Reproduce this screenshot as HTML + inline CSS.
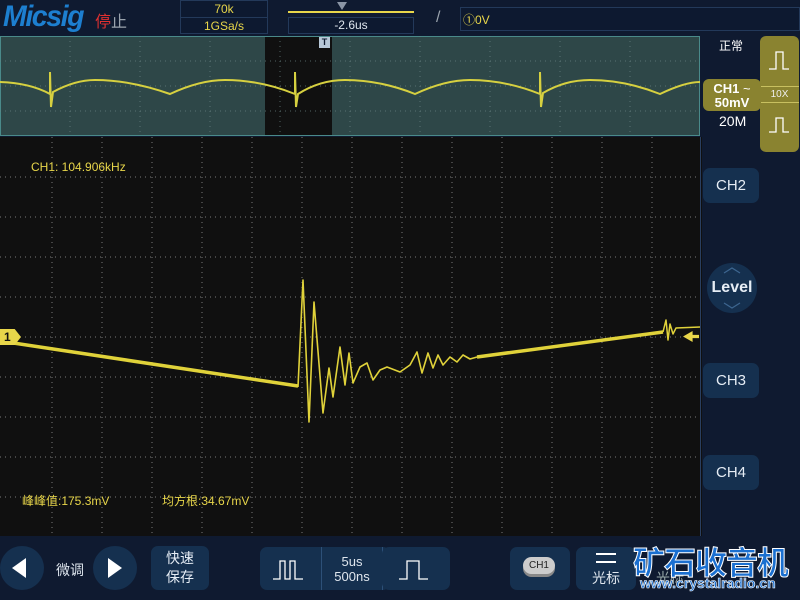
<!DOCTYPE html>
<html><head><meta charset="utf-8"><style>
*{margin:0;padding:0;box-sizing:border-box}
body{width:800px;height:600px;background:#0f1a30;overflow:hidden;position:relative;font-family:"Liberation Sans","Noto Sans CJK SC",sans-serif;color:#dfe6ee}
.a{position:absolute}
.box{position:absolute;border:1px solid #23395a;background:#0d1930}
.btn{position:absolute;background:#15304f;border-radius:7px;color:#e6edf5;text-align:center}
.y{color:#e8d64a}
</style></head><body>
<!-- top bar -->
<div class="a" style="left:3px;top:0px;font:italic bold 30px 'Liberation Sans',sans-serif;color:#1d7fd0;letter-spacing:-1.5px;transform:scaleX(.95);transform-origin:left">Micsig</div>
<div class="a" style="left:95px;top:8px;font-size:16px;color:#9aa3ad"><span style="color:#e03030">停</span>止</div>
<div class="box" style="left:180px;top:0;width:88px;height:34px"></div>
<div class="a y" style="left:180px;top:2px;width:88px;text-align:center;font-size:12px">70k</div>
<div class="a" style="left:180px;top:17px;width:88px;height:1px;background:#23395a"></div>
<div class="a y" style="left:180px;top:19px;width:88px;text-align:center;font-size:12px">1GSa/s</div>
<div class="a" style="left:288px;top:11px;width:126px;height:2px;background:#e8d64a"></div>
<div class="a" style="left:337px;top:2px;width:10px;height:8px;background:#8a95a5;clip-path:polygon(0 0,100% 0,50% 100%)"></div>
<div class="box" style="left:288px;top:17px;width:126px;height:17px"></div>
<div class="a" style="left:288px;top:18px;width:126px;text-align:center;font-size:12px">-2.6us</div>
<div class="a" style="left:436px;top:9px;font-size:16px;color:#9aa3ad">/</div>
<div class="box" style="left:460px;top:7px;width:340px;height:24px"></div>
<div class="a y" style="left:463px;top:11px;font-size:12px">①0V</div>
<!-- overview -->
<svg class="a" style="left:0;top:36px" width="700" height="100">
<rect width="700" height="100" fill="#2e4748"/>
<rect x="265" y="0" width="67" height="100" fill="#101010"/>
<rect x="0.5" y="0.5" width="699" height="99" fill="none" stroke="#4a8a8a"/>
<g stroke="#6a8585" stroke-width="1" stroke-dasharray="1 4" opacity=".7">
<line x1="0" y1="50" x2="700" y2="50"/><line x1="0" y1="25" x2="700" y2="25"/><line x1="0" y1="75" x2="700" y2="75"/>
<line x1="70" y1="0" x2="70" y2="100"/><line x1="140" y1="0" x2="140" y2="100"/><line x1="210" y1="0" x2="210" y2="100"/><line x1="280" y1="0" x2="280" y2="100"/><line x1="350" y1="0" x2="350" y2="100"/><line x1="420" y1="0" x2="420" y2="100"/><line x1="490" y1="0" x2="490" y2="100"/><line x1="560" y1="0" x2="560" y2="100"/><line x1="630" y1="0" x2="630" y2="100"/>
</g>
<path fill="none" stroke="#d6d040" stroke-width="2" d="M0 46Q30 47 50 58L50 36 51 71 53 56Q75 44 95 44Q130 44 170 58Q200 44 225 44Q260 44 295 58L295 36 296 71 298 58Q320 44 345 44Q380 44 415 58Q445 44 470 44Q505 44 540 58L540 36 541 71 543 57Q565 44 590 44Q625 44 660 58Q685 46 700 46"/>
</svg>
<div class="a" style="left:319px;top:37px;width:11px;height:11px;background:#b8c8d8;color:#0f1a30;font:bold 9px sans-serif;text-align:center;line-height:11px">T</div>
<div class="a" style="left:606px;top:137px;width:11px;height:11px;background:#b8c8d8;color:#0f1a30;font:bold 9px sans-serif;text-align:center;line-height:11px">T</div>
<!-- main -->
<svg class="a" style="left:0;top:137px" width="702" height="399">
<rect width="702" height="399" fill="#101010"/>
<g stroke="#7a7a7a" stroke-width="1" stroke-dasharray="1 4">
<line x1="0" y1="40" x2="700" y2="40"/><line x1="0" y1="80" x2="700" y2="80"/><line x1="0" y1="120" x2="700" y2="120"/><line x1="0" y1="160" x2="700" y2="160"/><line x1="0" y1="200" x2="700" y2="200"/><line x1="0" y1="240" x2="700" y2="240"/><line x1="0" y1="280" x2="700" y2="280"/><line x1="0" y1="320" x2="700" y2="320"/><line x1="0" y1="360" x2="700" y2="360"/>
<line x1="52" y1="0" x2="52" y2="399"/><line x1="102" y1="0" x2="102" y2="399"/><line x1="152" y1="0" x2="152" y2="399"/><line x1="202" y1="0" x2="202" y2="399"/><line x1="252" y1="0" x2="252" y2="399"/><line x1="302" y1="0" x2="302" y2="399"/><line x1="352" y1="0" x2="352" y2="399"/><line x1="402" y1="0" x2="402" y2="399"/><line x1="452" y1="0" x2="452" y2="399"/><line x1="502" y1="0" x2="502" y2="399"/><line x1="552" y1="0" x2="552" y2="399"/><line x1="602" y1="0" x2="602" y2="399"/><line x1="652" y1="0" x2="652" y2="399"/>
</g>
<line x1="700.5" y1="0" x2="700.5" y2="399" stroke="#2a3f60"/>
<g transform="translate(0,-137)" fill="none" stroke="#e0d23a" stroke-linejoin="round">
<polyline stroke-width="3.5" points="0,341 298,386"/>
<polyline stroke-width="1.6" points="298,387 303,280 309,422 314,302 323,413 329,368 333,397 340,347 345,385 349,353 353,383 360,367 367,363 373,380 380,370 387,367 400,372 410,365 417,352 422,373 428,353 433,368 438,355 443,365 450,357 457,362 463,355 470,359 477,357"/>
<polyline stroke-width="3.5" points="477,357 663,332"/>
<polyline stroke-width="1.5" points="663,332 666,320 668,340 670,324 673,334 676,328 700,327"/>
</g>
</svg>
<div class="a" style="left:0;top:329px;width:21px;height:16px;background:#e8d64a;clip-path:polygon(0 0,70% 0,100% 50%,70% 100%,0 100%);color:#111;font:bold 12px sans-serif;padding-left:4px;line-height:16px">1</div>
<div class="a" style="left:683px;top:331px;width:16px;height:11px;background:#e8d64a;clip-path:polygon(0 50%,60% 0,60% 35%,100% 35%,100% 65%,60% 65%,60% 100%)"></div>
<div class="a y" style="left:31px;top:160px;font-size:12px">CH1: 104.906kHz</div>
<div class="a y" style="left:22px;top:492px;font-size:12px">峰峰值:175.3mV</div>
<div class="a y" style="left:162px;top:492px;font-size:12px">均方根:34.67mV</div>
<!-- right panel -->
<div class="a" style="left:719px;top:37px;font-size:12px;color:#fff">正常</div>
<div class="a" style="left:760px;top:36px;width:39px;height:116px;background:#8a8330;border-radius:6px"></div>
<div class="a" style="left:760px;top:86px;width:39px;height:1px;background:#c8c060"></div>
<div class="a" style="left:760px;top:102px;width:39px;height:1px;background:#c8c060"></div>
<div class="a" style="left:760px;top:89px;width:39px;text-align:center;font-size:10px;color:#eee">10X</div>
<svg class="a" style="left:768px;top:50px" width="22" height="90"><path d="M1 19H8V2H15V19H21M1 82H8V68H15V82H21" fill="none" stroke="#fff" stroke-width="1.3"/></svg>
<div class="a" style="left:703px;top:79px;width:58px;height:32px;background:#8a8330;border-radius:6px;color:#fff;font:bold 13px sans-serif;text-align:center;line-height:14px;padding-top:3px">CH1 <span style="font-weight:normal">~</span><br>50mV</div>
<div class="a" style="left:719px;top:113px;font-size:14px;color:#fff">20M</div>
<div class="btn" style="left:703px;top:168px;width:56px;height:35px;line-height:35px;font-size:15px">CH2</div>
<div class="a" style="left:707px;top:263px;width:50px;height:50px;border-radius:50%;background:#15304f;color:#e6edf5;font:bold 16px sans-serif;text-align:center;line-height:50px">Level</div>
<svg class="a" style="left:720px;top:265px" width="24" height="46"><path d="M4 8L12 3 20 8M4 38L12 43 20 38" fill="none" stroke="#3d6690" stroke-width="1.2"/></svg>
<div class="btn" style="left:703px;top:363px;width:56px;height:35px;line-height:35px;font-size:15px">CH3</div>
<div class="btn" style="left:703px;top:455px;width:56px;height:35px;line-height:35px;font-size:15px">CH4</div>
<!-- bottom -->
<div class="a" style="left:0;top:546px;width:44px;height:44px;border-radius:50%;background:#15304f"></div>
<div class="a" style="left:12px;top:558px;width:14px;height:20px;background:#fff;clip-path:polygon(100% 0,0 50%,100% 100%)"></div>
<div class="a" style="left:56px;top:560px;font-size:14px">微调</div>
<div class="a" style="left:93px;top:546px;width:44px;height:44px;border-radius:50%;background:#15304f"></div>
<div class="a" style="left:108px;top:558px;width:14px;height:20px;background:#fff;clip-path:polygon(0 0,100% 50%,0 100%)"></div>
<div class="btn" style="left:151px;top:546px;width:58px;height:44px;font-size:14px;line-height:19px;padding-top:3px">快速<br>保存</div>
<div class="btn" style="left:260px;top:547px;width:130px;height:43px"></div>
<div class="a" style="left:321px;top:547px;width:1px;height:43px;background:#2d5078"></div>
<div class="a" style="left:382px;top:547px;width:1px;height:43px;background:#2d5078"></div>
<div class="btn" style="left:382px;top:547px;width:68px;height:43px"></div>
<svg class="a" style="left:272px;top:557px" width="170" height="24"><path d="M1 22H8V4H13V22H18V4H23V22H31M127 22H135V4H147V22H156" fill="none" stroke="#fff" stroke-width="1.3"/></svg>
<div class="a" style="left:322px;top:554px;width:60px;text-align:center;font-size:13px;line-height:15px">5us<br>500ns</div>
<div class="btn" style="left:510px;top:547px;width:60px;height:43px"></div>
<div class="a" style="left:523px;top:557px;width:32px;height:17px;border-radius:9px;background:#ccc;color:#222;font-size:10px;text-align:center;line-height:17px;box-shadow:0 3px 0 #888">CH1</div>
<div class="btn" style="left:576px;top:547px;width:60px;height:43px"></div>
<div class="a" style="left:596px;top:553px;width:20px;height:10px;border-top:2px solid #fff;border-bottom:2px solid #fff"></div>
<div class="a" style="left:592px;top:568px;font-size:14px">光标</div>
<div class="a" style="left:656px;top:568px;font-size:14px;color:#9aa">光标</div>
<div class="a" style="left:633px;top:538px;font:bold 32px 'Noto Sans CJK SC',sans-serif;color:#1a6fd0;-webkit-text-stroke:1px #fff;letter-spacing:-1px">矿石收音机</div>
<div class="a" style="left:640px;top:575px;font:bold 14px 'Liberation Sans',sans-serif;color:#1a6fd0;-webkit-text-stroke:.6px #fff">www.crystalradio.cn</div>
</body></html>
